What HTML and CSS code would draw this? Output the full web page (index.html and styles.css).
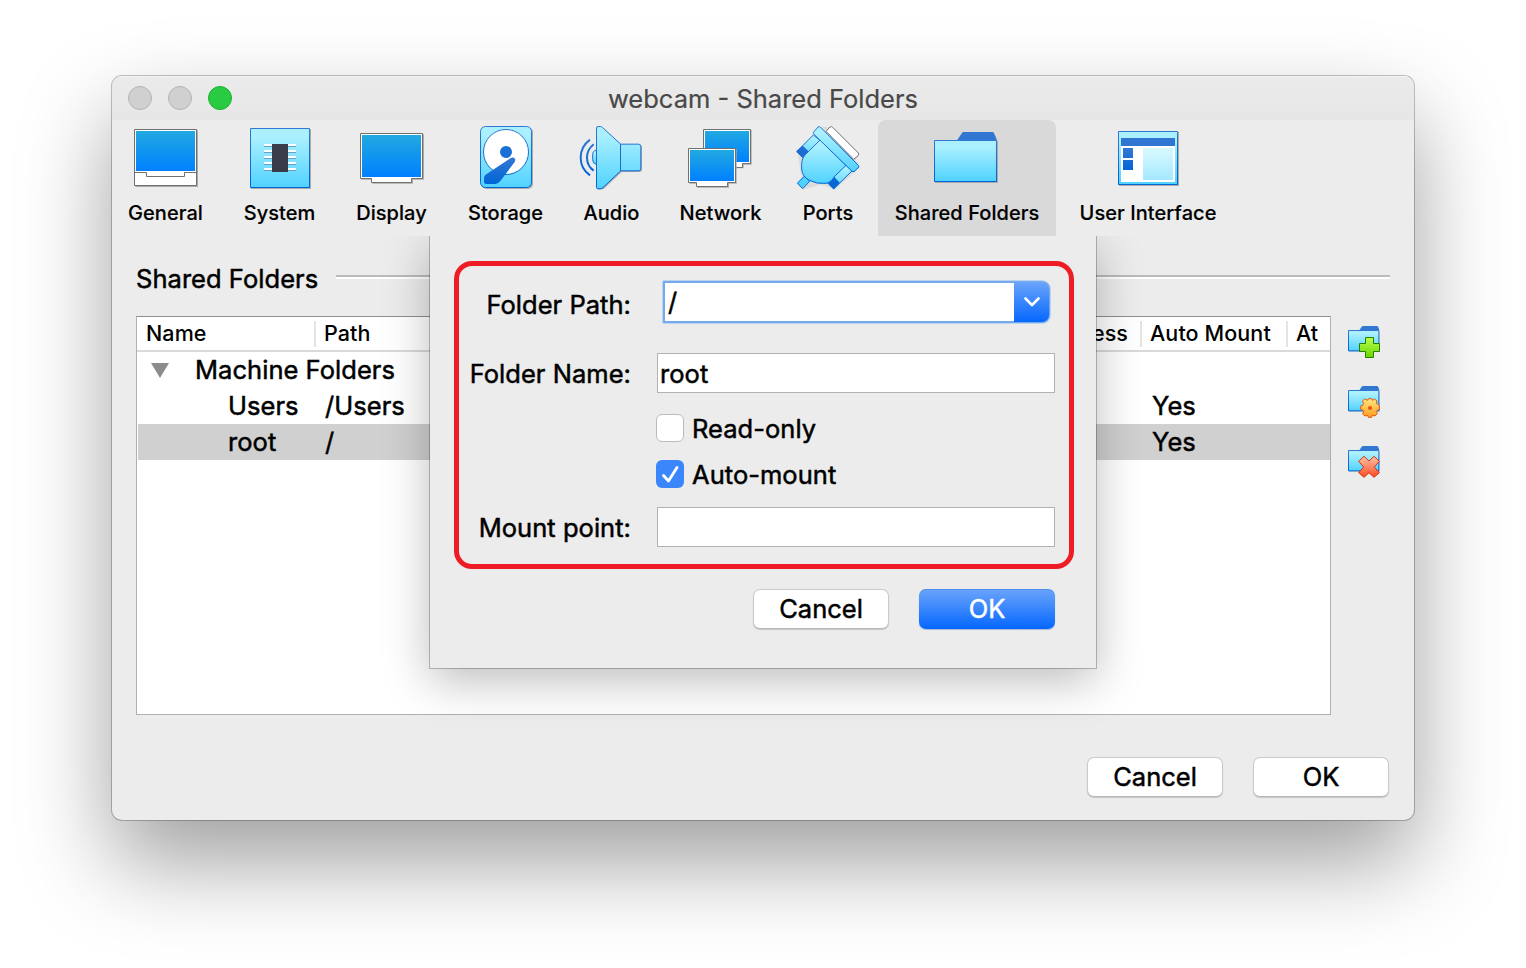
FILE: index.html
```html
<!DOCTYPE html>
<html lang="en">
<head>
<meta charset="utf-8">
<title>webcam - Shared Folders</title>
<link rel="stylesheet" href="styles.css">
</head>
<body>
<svg class="defs" width="0" height="0" aria-hidden="true">
  <defs>
    <linearGradient id="screen" x1="0" y1="0" x2="0" y2="1"><stop offset="0" stop-color="#21a9e1"/><stop offset="1" stop-color="#0080ff"/></linearGradient>
    <linearGradient id="cyan" x1="0" y1="0" x2="0" y2="1"><stop offset="0.15" stop-color="#aaf0ff"/><stop offset="1" stop-color="#50d2ff"/></linearGradient>
    <linearGradient id="line" x1="0" y1="0" x2="0" y2="1"><stop offset="0" stop-color="#3278d2"/><stop offset="1" stop-color="#0064d7"/></linearGradient>
    <linearGradient id="green" x1="0" y1="0" x2="0" y2="1"><stop offset="0" stop-color="#b9ff50"/><stop offset="1" stop-color="#6bd500"/></linearGradient>
    <linearGradient id="gold" x1="0" y1="0" x2="0" y2="1"><stop offset="0" stop-color="#ffe680"/><stop offset="1" stop-color="#ff9d20"/></linearGradient>
    <linearGradient id="red" x1="0" y1="0" x2="0" y2="1"><stop offset="0" stop-color="#ffc3a8"/><stop offset="1" stop-color="#ff4a20"/></linearGradient>
  </defs>
</svg>
<main class="window">
  <header class="titlebar">
    <div class="lights"><i></i><i></i><i class="zoom"></i></div>
    <h1>webcam - Shared Folders</h1>
  </header>
  <nav class="toolbar">
    <a class="tool odd"><svg viewBox="93 171 207 210"><path d="M106 196H294V366H106Z" fill="#aaa"/><path d="M103.500 193.500H289.500V361.500H103.500Z" fill="#fff" stroke="#707070" stroke-width="3"/><path d="M108 198H285V318H108Z" fill="url(#screen)"/><path d="M103.500 322.500H139.500V334.500H253.500V322.500H289.500" fill="none" stroke="#707070" stroke-width="3"/></svg><span>General</span></a>
    <a class="tool odd"><svg viewBox="435 171 207 210"><path d="M453 192H633V372H453Z" fill="#aaa"/><path d="M451.500 190.500H628.500V367.500H451.500Z" fill="url(#cyan)" stroke="url(#line)" stroke-width="3"/><path d="M492 240H588M492 258H588M492 276H588M492 294H588M492 312H588" stroke="#fff" stroke-width="6"/><path d="M492 244.500H588M492 262.500H588M492 280.500H588M492 298.500H588M492 316.500H588" stroke="#64a2cc" stroke-width="3"/><path d="M516 237H564V321H516Z" fill="#383c48"/></svg><span>System</span></a>
    <a class="tool odd"><svg viewBox="771 171 207 210"><path d="M784 208H972V344H939V356H817V344H784Z" fill="#aaa"/><path d="M781.500 205.500H967.500V340.500H934.500V352.500H814.500V340.500H781.500Z" fill="#fff" stroke="#707070" stroke-width="3"/><path d="M786 210H963V336H786Z" fill="url(#screen)"/></svg><span>Display</span></a>
    <a class="tool odd"><svg viewBox="123 36 207 210"><rect x="154" y="52" width="155" height="185" rx="15" fill="#aaa"/><rect x="151.500" y="49.500" width="153" height="183" rx="15" fill="url(#cyan)" stroke="url(#line)" stroke-width="3"/><circle cx="228" cy="126" r="67.500" fill="#fff" stroke="url(#line)" stroke-width="3"/><circle cx="228" cy="126" r="18" fill="#1a70d4"/><path d="M162 203Q162 198 167 194L241 145Q250 140 255 146Q257 150 254 156L211 213Q204 222 196 222H169Q162 222 162 214Z" fill="url(#line)"/></svg><span>Storage</span></a>
    <a class="tool odd"><svg viewBox="441 36 207 210"><path d="M502 52H517L575 105H628Q636 105 636 113V178Q636 186 628 186H575L520 238H507Q502 238 502 233Z" fill="#aaa"/><path d="M500 121H495Q488 126 488 133V149Q488 161 498 163H500Z" fill="url(#cyan)" stroke="#1a70d4" stroke-width="3"/><path d="M499.500 54Q499.500 49.500 504 49.500H511Q515 49.500 518 53L572 102.500H626Q632.500 102.500 632.500 109V176Q632.500 182.500 626 182.500H572L520 232Q516 236.500 510 236.500H504Q499.500 236.500 499.500 232Z" fill="url(#cyan)" stroke="url(#line)" stroke-width="3"/><path d="M571.500 102V183" stroke="#176dd5" stroke-width="3"/><path d="M491 103Q471 119 471 143T491 182M480 89Q452 110 452 143T480 196" fill="none" stroke="url(#line)" stroke-width="6"/></svg><span>Audio</span></a>
    <a class="tool odd"><svg viewBox="78 36 207 210"><path d="M133 60H275V164H251V175H133Z" fill="#aaa"/><path d="M130.500 58.500H271.500V160.500H247.500V172.500H130.500Z" fill="#fff" stroke="#707070" stroke-width="3"/><path d="M135 63H267V156H135Z" fill="url(#screen)"/><path d="M88 118H230V221H207V233H112V221H88Z" fill="#aaa"/><path d="M85.500 115.500H226.500V217.500H202.500V229.500H109.500V217.500H85.500Z" fill="#fff" stroke="#707070" stroke-width="3"/><path d="M90 120H222V213H90Z" fill="url(#screen)"/></svg><span>Network</span></a>
    <a class="tool"><svg viewBox="399 36 210 210"><path d="M413 125L459 78L484 50L517 52L599 134L587 150L599 171L582 188L526 238L482 224L430 239L412 225L424 205Z" fill="#aaa" opacity=".25"/><path d="M498 64L510 51Q514 48 518 52L595 129Q598 133 594 137L581 148Z" fill="#fff" stroke="#707070" stroke-width="3"/><path d="M410 125L460 75L480 91L428 143Z" fill="url(#cyan)" stroke="#1d70d3" stroke-width="3"/><path d="M409 124L428 107L447 125L428 143Z" fill="#1e6cd2"/><path d="M502 218L557 164L577 182L521 237Z" fill="url(#cyan)" stroke="#086ad8" stroke-width="3"/><path d="M502 218L521 199L539 218L521 237Z" fill="#0868d4"/><path d="M412 219L433 199L449 214L428 236Z" fill="#50d2ff" stroke="#086ad8" stroke-width="3"/><path d="M480 90L436 134Q423 146 425 177Q427 200 448 211Q470 223 498 220Q514 217 523 200L558 166Z" fill="url(#cyan)" stroke="url(#line)" stroke-width="3"/><path d="M460 67L474 51Q478 48 482 52L595 166Q598 170 594 174L583 184Q579 187 575 183L462 73Q459 70 460 67Z" fill="url(#cyan)" stroke="url(#line)" stroke-width="3"/></svg><span>Ports</span></a>
    <a class="tool active"><svg viewBox="186 36 210 210"><path d="M195 93H384V219H195Z" fill="#aaa"/><path d="M261 91L278 66H369Q373 68 381 91Z" fill="#3278d2"/><path d="M193.500 91.500H379.500V214.500H193.500Z" fill="url(#cyan)" stroke="url(#line)" stroke-width="3"/></svg><span>Shared Folders</span></a>
    <a class="tool"><svg viewBox="729 36 210 210"><path d="M747 66H927V228H747Z" fill="#aaa"/><path d="M745.500 64.500H922.500V223.500H745.500Z" fill="url(#cyan)" stroke="url(#line)" stroke-width="3"/><path d="M753 84H915V216H753Z" fill="#fff"/><path d="M753 84H915V108H753Z" fill="#2f76d2"/><path d="M759 114H789V144H759ZM759 150H789V180H759Z" fill="url(#line)"/><path d="M819 114H909V210H819Z" fill="url(#cyan)" opacity=".52"/></svg><span>User Interface</span></a>
  </nav>
  <section class="content">
    <div class="section-head"><h2>Shared Folders</h2><hr></div>
    <div class="main">
      <div class="table">
        <div class="row head"><span>Name</span><span>Path</span><span class="access">Access</span><span>Auto Mount</span><span>At</span></div>
        <div class="row group"><span><svg class="arrow" viewBox="0 0 18 15"><path d="M0 0H18L9 15Z" fill="#8c8c8c"/></svg>Machine Folders</span></div>
        <div class="row item"><span>Users</span><span>/Users</span><span>Yes</span></div>
        <div class="row item selected"><span>root</span><span>/</span><span>Yes</span></div>
      </div>
      <div class="actions">
        <svg viewBox="258 72 108 108"><path d="M267 93H360V156H267Z" fill="#aaa" opacity=".5"/><path d="M298 91L306 79Q308 78 312 78H351Q355 78 358 91Z" fill="#3278d2"/><path d="M265.500 91.500H356.500V152.500H265.500Z" fill="url(#cyan)" stroke="url(#line)" stroke-width="3"/><path d="M316.500 112.500H340.500V130.500H358.500V154.500H340.500V172.500H316.500V154.500H298.500V130.500H316.500Z" fill="url(#green)" stroke="#258000" stroke-width="3"/></svg>
        <svg viewBox="258 72 108 108"><path d="M267 93H360V156H267Z" fill="#aaa" opacity=".5"/><path d="M298 91L306 79Q308 78 312 78H351Q355 78 358 91Z" fill="#3278d2"/><path d="M265.500 91.500H356.500V152.500H265.500Z" fill="url(#cyan)" stroke="url(#line)" stroke-width="3"/><path d="M325 116H335L337 121L344 117L351 123L349 130L353 133L358 137V148L353 150L349 154L352 161L345 168L338 165L335 172H325L323 166L315 168L308 162L311 154L308 150L302 148V138L308 136L311 130L307 123L314 117L323 121Z" fill="url(#gold)" stroke="#e05a14" stroke-width="3" stroke-linejoin="round"/><circle cx="330" cy="144" r="6" fill="#e05a14"/></svg>
        <svg viewBox="258 72 108 108"><path d="M267 93H360V156H267Z" fill="#aaa" opacity=".5"/><path d="M298 91L306 79Q308 78 312 78H351Q355 78 358 91Z" fill="#3278d2"/><path d="M265.500 91.500H356.500V152.500H265.500Z" fill="url(#cyan)" stroke="url(#line)" stroke-width="3"/><path d="M312 109L327 123L342 109L358 124L343 141L358 158L342 172L327 158L312 172L296 158L311 141L296 124Z" fill="url(#red)" stroke="#cd3310" stroke-width="3" stroke-linejoin="round"/></svg>
      </div>
    </div>
    <footer class="buttons"><button>Cancel</button><button>OK</button></footer>
    <form class="sheet" onsubmit="return false">
      <div class="fields">
        <div class="field path"><label>Folder Path:</label><div class="combo"><span>/</span><b><svg viewBox="0 0 16 10"><path d="M1.500 1.500L8 8L14.500 1.500" fill="none" stroke="#fff" stroke-width="2.600" stroke-linecap="round" stroke-linejoin="round"/></svg></b></div></div>
        <div class="field name"><label>Folder Name:</label><div class="input">root</div></div>
        <div class="check"><i></i><span>Read-only</span></div>
        <div class="check on"><i><svg viewBox="0 0 28 28"><path d="M7.500 15.500L12.500 21L21 7.500" fill="none" stroke="#fff" stroke-width="2.800" stroke-linecap="round" stroke-linejoin="round"/></svg></i><span>Auto-mount</span></div>
        <div class="field mount"><label>Mount point:</label><div class="input"></div></div>
      </div>
      <div class="buttons"><button>Cancel</button><button class="primary">OK</button></div>
    </form>
  </section>
</main>
</body>
</html>
```
FILE: styles.css
```css
* { box-sizing: border-box; }
body { margin: 0; height: 968px; padding: 76px 112px; background: #fff; overflow: hidden; color: #000; font: 400 25.5px/36px Inter, "Liberation Sans", sans-serif; letter-spacing: .04px; -webkit-text-stroke: .5px; }
.defs { position: absolute; }
.window { height: 744px; border-radius: 10px; background: #ececec; box-shadow: 0 0 0 1px rgba(0,0,0,.23), 0 42px 90px rgba(0,0,0,.38); overflow: hidden; }
.titlebar { height: 44px; display: grid; grid-template-columns: 200px 1fr 200px; align-items: center; background: linear-gradient(#ebebeb, #e6e6e6); box-shadow: inset 0 1px #f4f4f4; }
.titlebar h1 { margin: 2px 0 0; text-align: center; font-size: 25.5px; font-weight: 400; letter-spacing: 0; color: #484848; white-space: nowrap; -webkit-text-stroke: .2px; }
.lights { display: flex; gap: 16px; padding-left: 16px; }
.lights i { width: 24px; height: 24px; border-radius: 50%; background: #d0d0d0; border: 1px solid #b3b3b3; }
.lights .zoom { background: #28cb42; border-color: #17b32d; }

.toolbar { height: 116px; padding-left: 1px; display: grid; column-gap: 9px; grid-template-columns: 105px 105px 101px 109px 85px 115px 82px 178px 166px; }
.tool { display: flex; flex-direction: column; align-items: center; padding-top: 2px; font-size: 20px; font-weight: 500; line-height: 26px; letter-spacing: .05px; white-space: nowrap; -webkit-text-stroke: .15px; }
.tool svg { width: 70px; height: 70px; margin-bottom: 8px; flex: none; }
.tool.odd svg { width: 69px; }
.tool.active { background: #d9d9d9; border-radius: 8px 8px 0 0; }

.content { position: relative; height: 584px; overflow: hidden; padding: 25px 24px 0; }
.section-head { display: flex; height: 36px; gap: 17px; }
.section-head h2 { margin: 0; width: 183px; font-size: 25.5px; font-weight: 400; white-space: nowrap; }
.section-head hr { flex: 1; height: 4px; margin: 14px 0 0; border: 0; background: linear-gradient(#bababa 50%, #fff 50%); }
.main { display: flex; gap: 15px; margin-top: 19px; }
.table { width: 1195px; height: 399px; background: #fff; border: 1px solid #b0b0b0; border-top-color: #8e8e8e; }
.row { height: 36px; white-space: nowrap; }
.row.head { display: grid; grid-template-columns: 179px 750px 76px 146px 42px; height: 35px; padding: 4px 0 3px; border-bottom: 2px solid #dadada; font-size: 21.5px; font-weight: 500; line-height: 24px; letter-spacing: .1px; -webkit-text-stroke: 0; }
.row.head span { padding-left: 8px; border-right: 2px solid #e4e4e4; }
.row.head span:first-child { padding-left: 9px; }
.row.head span:nth-child(2), .row.head span:last-child { border-right: 0; }
.row.head .access { padding: 0 12px 0 0; display: flex; justify-content: flex-end; }
.row.group > span { display: flex; align-items: center; gap: 26px; padding-left: 14px; }
.arrow { width: 18px; height: 15px; flex: none; }
.row.item { display: grid; grid-template-columns: 178px 826px 188px; margin-left: 1px; }
.row.item span { padding-left: 10px; }
.row.item span:nth-child(2) { padding-left: 9px; }
.row.item span:first-child { padding-left: 90px; }
.selected { background: #d0d0d0; }
.actions { display: flex; flex-direction: column; gap: 24px; padding-top: 8px; }
.actions svg { width: 36px; height: 36px; }
.buttons { display: flex; justify-content: flex-end; gap: 30px; }
footer.buttons { padding: 42px 1px 0 0; }
button { width: 136px; height: 40px; padding: 0; border: 1px solid #cacaca; border-bottom-color: #b8b8b8; border-radius: 7px; background: #fff; box-shadow: 0 1px 1px rgba(0,0,0,.16); font: inherit; color: inherit; -webkit-text-stroke: inherit; }
button.primary { color: #fff; border: 0; background: linear-gradient(#6ba4fb, #0567ff); box-shadow: inset 0 1px rgba(38,113,220,.4), 0 1px 1px rgba(0,70,180,.3); }

.sheet { position: absolute; left: 318px; top: 0; width: 666px; height: 432px; padding: 25px 22px 0 24px; background: #ececec; box-shadow: 0 0 0 1px rgba(0,0,0,.24), 0 12px 44px rgba(0,0,0,.27); }
.fields { height: 308px; border: 5px solid #ee1c25; border-radius: 18px; padding: 15px 14px 0 0; }
.field { display: flex; align-items: center; }
.field label { width: 172px; margin-right: 26px; text-align: right; white-space: nowrap; }
.input { flex: 1; height: 40px; border: 1px solid #b2b2b2; background: #fff; padding: 2px 2px 0; }
.combo { width: 387px; height: 42px; margin-left: 6px; display: flex; border: 2px solid #76aaea; box-shadow: 0 0 0 1px #b9d4f1; border-radius: 1px 8px 8px 1px; background: #fff; }
.combo span { flex: 1; padding: 1px 3px 0; }
.combo b { width: 35px; margin: -1px -1px -1px 0; border-radius: 0 7px 7px 0; background: linear-gradient(#6ba4fb, #0567ff); display: grid; place-items: center; }
.combo svg { width: 16px; height: 10px; }
.path label { padding-top: 5px; }
.name { margin-top: 30px; }
.name label, .mount label { padding-top: 2px; }
.check { display: flex; align-items: center; gap: 8px; height: 28px; margin: 21px 0 0 197px; }
.check.on { margin-top: 18px; }
.check i { width: 28px; height: 28px; border: 1px solid #bcbcbc; border-radius: 6px; background: #fff; }
.check.on i { border: 0; background: #3b86fc; }
.check svg { display: block; }
.check span { padding-top: 2px; }
.mount { margin-top: 19px; }
.sheet .buttons { padding: 20px 19px 0 0; }
```
